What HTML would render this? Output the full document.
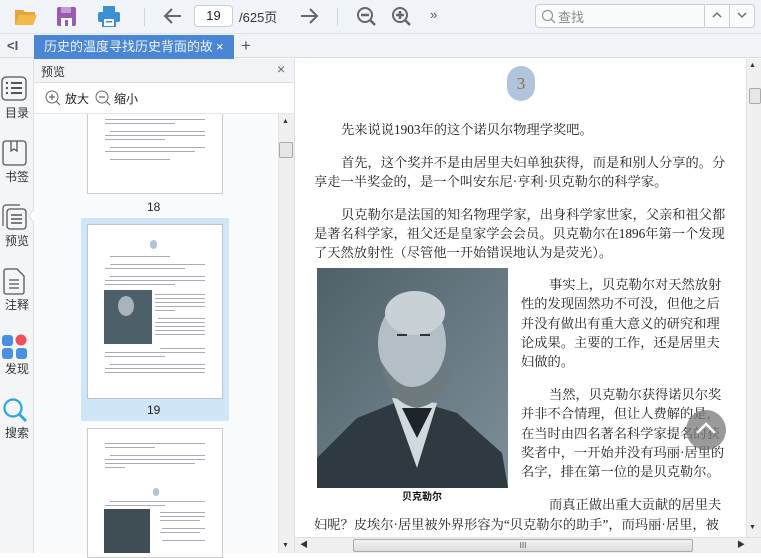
<!DOCTYPE html>
<html><head><meta charset="utf-8"><style>
*{margin:0;padding:0;box-sizing:border-box}
body{width:761px;height:553px;overflow:hidden;position:relative;font-family:"Liberation Sans","Noto Sans CJK SC",sans-serif;background:#fff}
.a{position:absolute}
.tb{left:0;top:0;width:761px;height:34px;background:#f0f4f8;border-bottom:1px solid #dde3ea}
.tabbar{left:0;top:34px;width:761px;height:24px;background:#f1f3f6;border-bottom:1px solid #d8dce2}
.side{left:0;top:58px;width:34px;height:495px;background:#f3f5f7;border-right:1px solid #dde1e6}
.lbl{font-size:12px;color:#333;width:34px;text-align:center;left:-3px}
.doc{font-family:"Liberation Serif","Noto Serif CJK SC",serif;font-size:13.25px;color:#222;white-space:nowrap;line-height:19px}
.bar{position:absolute;height:1.3px;background:#aab}
</style></head><body>
<div class="a tb"></div>
<svg class="a" style="left:14px;top:6px" width="24" height="20"><path d="M1 4h8l2 2h10v3H6L2 18H1z" fill="#e0a63a"/><path d="M5 9h18l-4 10H1z" fill="#f0b94a"/></svg>
<svg class="a" style="left:57px;top:7px" width="19" height="19"><rect x="0" y="0" width="19" height="19" rx="2" fill="#9b59b6"/><rect x="4" y="0" width="10" height="6" fill="#c39bd3"/><rect x="4" y="11" width="11" height="8" fill="#fff"/><rect x="8" y="13" width="3" height="6" fill="#9b59b6"/></svg>
<svg class="a" style="left:98px;top:6px" width="22" height="21"><rect x="5" y="0" width="12" height="6" fill="#3b8fd4"/><rect x="0" y="6" width="22" height="10" rx="2" fill="#3b8fd4"/><rect x="5" y="12" width="12" height="9" fill="#fff" stroke="#3b8fd4" stroke-width="2"/><rect x="8" y="15" width="6" height="1.5" fill="#3b8fd4"/></svg>
<div class="a" style="left:144px;top:8px;width:1px;height:18px;background:#cfd5dc"></div>
<svg class="a" style="left:163px;top:7px" width="20" height="18"><path d="M18 9H3M9 2L2 9l7 7" stroke="#666" stroke-width="2" fill="none"/></svg>
<div class="a" style="left:194px;top:5px;width:39px;height:22px;border:1px solid #c8ced6;border-radius:4px;background:#fff;font-size:13px;text-align:center;line-height:20px;color:#222">19</div>
<div class="a" style="left:239px;top:7px;font-size:13px;color:#333">/625页</div>
<svg class="a" style="left:299px;top:7px" width="20" height="18"><path d="M2 9h15M11 2l7 7-7 7" stroke="#666" stroke-width="2" fill="none"/></svg>
<div class="a" style="left:337px;top:8px;width:1px;height:18px;background:#cfd5dc"></div>
<svg class="a" style="left:356px;top:6px" width="22" height="22"><circle cx="9" cy="9" r="7" stroke="#666" stroke-width="2" fill="none"/><path d="M5 9h8M14 14l5 5" stroke="#666" stroke-width="2.5"/></svg>
<svg class="a" style="left:391px;top:6px" width="22" height="22"><circle cx="9" cy="9" r="7" stroke="#666" stroke-width="2" fill="none"/><path d="M5 9h8M9 5v8M14 14l5 5" stroke="#666" stroke-width="2.5"/></svg>
<div class="a" style="left:430px;top:7px;font-size:13px;color:#555">»</div>
<div class="a" style="left:535px;top:4px;width:220px;height:24px;border:1px solid #c8ced6;border-radius:4px;background:#fafbfc"></div>
<svg class="a" style="left:541px;top:9px" width="16" height="16"><circle cx="6.5" cy="6.5" r="5" stroke="#999" stroke-width="1.2" fill="none"/><path d="M10 10l4 4" stroke="#999" stroke-width="1.3"/></svg>
<div class="a" style="left:558px;top:7px;font-size:13px;color:#888">查找</div>
<div class="a" style="left:704px;top:5px;width:1px;height:22px;background:#c8ced6"></div>
<div class="a" style="left:729px;top:5px;width:1px;height:22px;background:#c8ced6"></div>
<svg class="a" style="left:711px;top:11px" width="12" height="8"><path d="M2 6l4-4 4 4" stroke="#666" stroke-width="1.3" fill="none"/></svg>
<svg class="a" style="left:736px;top:11px" width="12" height="8"><path d="M2 2l4 4 4-4" stroke="#666" stroke-width="1.3" fill="none"/></svg>
<div class="a tabbar"></div>
<div class="a" style="left:7px;top:38px;font-size:13px;color:#555;font-weight:bold">&lt;I</div>
<div class="a" style="left:34px;top:35px;width:200px;height:24px;background:#4a86d4"></div>
<div class="a" style="left:44px;top:35px;width:168px;height:24px;color:#eef4fc;font-size:13px;line-height:23px;white-space:nowrap;overflow:hidden">历史的温度寻找历史背面的故事</div>
<div class="a" style="left:216px;top:35px;width:14px;height:24px;color:#fff;font-size:13px;line-height:23px">×</div>
<div class="a" style="left:241px;top:36px;font-size:17px;color:#555">+</div>
<div class="a side"></div>
<svg class="a" style="left:1px;top:76px" width="26" height="26"><rect x="1" y="1" width="24" height="23" rx="4" stroke="#555" stroke-width="1.3" fill="none"/><path d="M5 7h2M10 7h11M5 12h2M10 12h11M5 17h2M10 17h11" stroke="#555" stroke-width="2"/></svg>
<div class="a lbl" style="top:104px;left:0">目录</div>
<svg class="a" style="left:2px;top:140px" width="25" height="26"><rect x="1" y="1" width="23" height="24" rx="3" stroke="#555" stroke-width="1.3" fill="none"/><path d="M9 1v10l3-2 3 2V1" stroke="#555" stroke-width="1.3" fill="none"/></svg>
<div class="a lbl" style="top:168px;left:0">书签</div>
<svg class="a" style="left:2px;top:204px" width="25" height="26"><path d="M1 22V4a3 3 0 0 1 3-3h14" stroke="#555" stroke-width="1.2" fill="none"/><rect x="5" y="5" width="19" height="20" rx="3" stroke="#555" stroke-width="1.3" fill="#f3f5f7"/><path d="M9 11h11M9 15h11M9 19h11" stroke="#555" stroke-width="1.5"/></svg>
<div class="a lbl" style="top:232px;left:0">预览</div>
<svg class="a" style="left:29px;top:208px" width="6" height="16"><path d="M6 0L0 8l6 8" fill="#fff" stroke="#dde1e6"/></svg>
<svg class="a" style="left:3px;top:268px" width="22" height="27"><path d="M1 3a2 2 0 0 1 2-2h11l7 7v16a2 2 0 0 1-2 2H3a2 2 0 0 1-2-2z" stroke="#555" stroke-width="1.3" fill="none"/><path d="M6 12h10M6 16h10M6 20h10" stroke="#555" stroke-width="1.3"/></svg>
<div class="a lbl" style="top:296px;left:0">注释</div>
<svg class="a" style="left:2px;top:333px" width="26" height="26"><rect x="0" y="2" width="11" height="11" rx="3" fill="#4a90e2"/><circle cx="19" cy="7" r="5.5" fill="#f0505a"/><rect x="0" y="15" width="11" height="11" rx="3" fill="#4a90e2"/><rect x="14" y="15" width="11" height="11" rx="3" fill="#4a90e2"/></svg>
<div class="a lbl" style="top:360px;left:0">发现</div>
<svg class="a" style="left:2px;top:397px" width="26" height="26"><circle cx="11" cy="11" r="8.5" stroke="#2aa6e0" stroke-width="2.2" fill="none"/><path d="M17 17l7 7" stroke="#2aa6e0" stroke-width="2.8"/></svg>
<div class="a lbl" style="top:424px;left:0">搜索</div>
<div class="a" style="left:34px;top:59px;width:260px;height:24px;background:#f1f3f6;border-bottom:1px solid #dde1e6"></div>
<div class="a" style="left:41px;top:63px;font-size:12px;color:#333">预览</div>
<div class="a" style="left:277px;top:61px;font-size:14px;color:#666">×</div>
<div class="a" style="left:34px;top:83px;width:260px;height:31px;background:#fff;border-bottom:1px solid #e3e6ea"></div>
<svg class="a" style="left:45px;top:90px" width="16" height="16"><circle cx="7" cy="7" r="6" stroke="#666" fill="none"/><path d="M4 7h6M7 4v6M11 11l4 4" stroke="#666" stroke-width="1.2"/></svg>
<div class="a" style="left:65px;top:90px;font-size:12px;color:#222">放大</div>
<svg class="a" style="left:95px;top:90px" width="16" height="16"><circle cx="7" cy="7" r="6" stroke="#666" fill="none"/><path d="M4 7h6M11 11l4 4" stroke="#666" stroke-width="1.2"/></svg>
<div class="a" style="left:114px;top:90px;font-size:12px;color:#222">缩小</div>
<div class="a" style="left:34px;top:114px;width:244px;height:439px;background:#fafbfc"></div>
<div class="a" style="left:278px;top:114px;width:16px;height:439px;background:#f0f0f0;border-left:1px solid #e4e4e4"></div>
<div class="a" style="left:279px;top:142px;width:14px;height:16px;background:#e6e6e6;border:1px solid #aaa;border-radius:2px"></div>
<div class="a" style="left:282px;top:118px;font-size:7px;color:#333">▲</div>
<div class="a" style="left:282px;top:542px;font-size:7px;color:#333">▼</div>
<div class="a" style="left:87px;top:114px;width:136px;height:80px;background:#fff;border:1px solid #ccc;border-top:none"></div>
<div class="bar" style="left:105px;top:119px;width:100px"></div><div class="bar" style="left:105px;top:123px;width:70px"></div>
<div class="bar" style="left:110px;top:131px;width:95px"></div><div class="bar" style="left:105px;top:135px;width:100px"></div><div class="bar" style="left:105px;top:139px;width:60px"></div>
<div class="bar" style="left:110px;top:147px;width:95px"></div><div class="bar" style="left:105px;top:151px;width:90px"></div>
<div class="bar" style="left:110px;top:159px;width:60px"></div>
<div class="a" style="left:147px;top:200px;font-size:12px;color:#222">18</div>
<div class="a" style="left:81px;top:218px;width:148px;height:203px;background:#cfe5f8"></div>
<div class="a" style="left:87px;top:224px;width:136px;height:175px;background:#fff;border:1px solid #b9c6d2"></div>
<div class="a" style="left:150px;top:240px;width:7px;height:9px;border-radius:4px;background:#b0c4dc"></div>
<div class="bar" style="left:110px;top:256px;width:60px"></div>
<div class="bar" style="left:110px;top:264px;width:95px"></div><div class="bar" style="left:105px;top:268px;width:80px"></div>
<div class="bar" style="left:110px;top:276px;width:95px"></div><div class="bar" style="left:105px;top:280px;width:100px"></div><div class="bar" style="left:105px;top:284px;width:70px"></div>
<div class="a" style="left:104px;top:290px;width:48px;height:54px;background:#4d5f68"></div>
<div class="a" style="left:118px;top:296px;width:16px;height:20px;border-radius:50%;background:#a8b4ba"></div>
<div class="bar" style="left:155px;top:294px;width:50px"></div><div class="bar" style="left:155px;top:298px;width:50px"></div><div class="bar" style="left:155px;top:302px;width:50px"></div><div class="bar" style="left:155px;top:306px;width:50px"></div><div class="bar" style="left:155px;top:310px;width:20px"></div>
<div class="bar" style="left:158px;top:318px;width:47px"></div><div class="bar" style="left:155px;top:322px;width:50px"></div><div class="bar" style="left:155px;top:326px;width:50px"></div><div class="bar" style="left:155px;top:330px;width:50px"></div><div class="bar" style="left:155px;top:334px;width:50px"></div>
<div class="bar" style="left:160px;top:348px;width:45px"></div><div class="bar" style="left:105px;top:352px;width:100px"></div><div class="bar" style="left:105px;top:356px;width:60px"></div>
<div class="bar" style="left:110px;top:364px;width:95px"></div><div class="bar" style="left:105px;top:368px;width:100px"></div><div class="bar" style="left:105px;top:372px;width:100px"></div>
<div class="a" style="left:147px;top:403px;font-size:12px;color:#222">19</div>
<div class="a" style="left:87px;top:428px;width:136px;height:130px;background:#fff;border:1px solid #ccc"></div>
<div class="bar" style="left:105px;top:443px;width:100px"></div><div class="bar" style="left:105px;top:447px;width:50px"></div>
<div class="bar" style="left:110px;top:455px;width:95px"></div><div class="bar" style="left:105px;top:459px;width:100px"></div><div class="bar" style="left:105px;top:463px;width:90px"></div><div class="bar" style="left:105px;top:467px;width:20px"></div>
<div class="a" style="left:153px;top:488px;width:6px;height:8px;border-radius:3px;background:#b0c4dc"></div>
<div class="bar" style="left:110px;top:501px;width:95px"></div><div class="bar" style="left:105px;top:505px;width:60px"></div>
<div class="a" style="left:104px;top:509px;width:46px;height:44px;background:#3f4d55"></div>
<div class="bar" style="left:160px;top:512px;width:45px"></div><div class="bar" style="left:160px;top:516px;width:45px"></div><div class="bar" style="left:160px;top:520px;width:40px"></div><div class="bar" style="left:162px;top:528px;width:43px"></div><div class="bar" style="left:160px;top:532px;width:40px"></div><div class="bar" style="left:162px;top:540px;width:43px"></div>
<div class="a" style="left:294px;top:59px;width:1px;height:494px;background:#dde1e6"></div>
<div class="a" style="left:295px;top:59px;width:451px;height:478px;background:#fff"></div>
<div class="a" style="left:507px;top:66px;width:28px;height:35px;border-radius:14px;background:#b0c4dc;font-family:'Liberation Serif',serif;font-size:17px;color:#8a7240;text-align:center;line-height:35px">3</div>
<div class="a doc" style="left:341px;top:120px">先来说说1903年的这个诺贝尔物理学奖吧。</div>
<div class="a doc" style="left:341px;top:153px">首先，这个奖并不是由居里夫妇单独获得，而是和别人分享的。分</div>
<div class="a doc" style="left:314px;top:172px">享走一半奖金的，是一个叫安东尼·亨利·贝克勒尔的科学家。</div>
<div class="a doc" style="left:341px;top:205px">贝克勒尔是法国的知名物理学家，出身科学家世家，父亲和祖父都</div>
<div class="a doc" style="left:314px;top:224px">是著名科学家，祖父还是皇家学会会员。贝克勒尔在1896年第一个发现</div>
<div class="a doc" style="left:314px;top:243px">了天然放射性（尽管他一开始错误地认为是荧光）。</div>
<svg class="a" style="left:317px;top:268px" width="191" height="220"><defs><linearGradient id="g" x1="0" y1="0" x2="1" y2="1"><stop offset="0" stop-color="#4f6068"/><stop offset="1" stop-color="#7d909a"/></linearGradient></defs><rect width="191" height="220" fill="url(#g)"/><path d="M0 220V190l40-40 50-20 50 15 45 40 6 35z" fill="#2e3a40"/><path d="M75 130l25 70 20-65z" fill="#d0dade"/><path d="M85 140l15 30 15-30z" fill="#1c2428"/><ellipse cx="95" cy="75" rx="34" ry="44" fill="#b3bfc4"/><ellipse cx="98" cy="45" rx="30" ry="22" fill="#c8d2d6"/><path d="M65 95q30 50 70 0q-5 40-35 45q-30-5-35-45z" fill="#6f7a7e"/><path d="M80 67h10M103 67h10" stroke="#333" stroke-width="2"/></svg>
<div class="a" style="left:402px;top:488px;font-size:10px;font-weight:bold;color:#111">贝克勒尔</div>
<div class="a doc" style="left:549px;top:275px">事实上，贝克勒尔对天然放射</div>
<div class="a doc" style="left:521px;top:294px">性的发现固然功不可没，但他之后</div>
<div class="a doc" style="left:521px;top:314px">并没有做出有重大意义的研究和理</div>
<div class="a doc" style="left:521px;top:333px">论成果。主要的工作，还是居里夫</div>
<div class="a doc" style="left:521px;top:352px">妇做的。</div>
<div class="a doc" style="left:549px;top:385px">当然，贝克勒尔获得诺贝尔奖</div>
<div class="a doc" style="left:521px;top:404px">并非不合情理，但让人费解的是，</div>
<div class="a doc" style="left:521px;top:424px">在当时由四名著名科学家提名的获</div>
<div class="a doc" style="left:521px;top:443px">奖者中，一开始并没有玛丽·居里的</div>
<div class="a doc" style="left:521px;top:462px">名字，排在第一位的是贝克勒尔。</div>
<div class="a doc" style="left:549px;top:495px">而真正做出重大贡献的居里夫</div>
<div class="a doc" style="left:314px;top:515px">妇呢？皮埃尔·居里被外界形容为“贝克勒尔的助手”，而玛丽·居里，被</div>
<div class="a" style="left:686px;top:410px;width:40px;height:40px;border-radius:50%;background:rgba(120,120,120,.75)"></div>
<svg class="a" style="left:694px;top:420px" width="24" height="16"><path d="M3 13l9-9 9 9" stroke="#fff" stroke-width="2.5" fill="none"/></svg>
<div class="a" style="left:746px;top:59px;width:15px;height:478px;background:#f0f0f0;border-left:1px solid #e0e0e0"></div>
<div class="a" style="left:749px;top:62px;font-size:7px;color:#333">▲</div>
<div class="a" style="left:749px;top:88px;width:12px;height:16px;background:#e6e6e6;border:1px solid #aaa;border-radius:2px"></div>
<div class="a" style="left:749px;top:524px;font-size:7px;color:#333">▼</div>
<div class="a" style="left:295px;top:537px;width:466px;height:16px;background:#f0f0f0;border-top:1px solid #e0e0e0"></div>
<div class="a" style="left:300px;top:539px;font-size:8px;color:#333">◀</div>
<div class="a" style="left:353px;top:539px;width:340px;height:13px;background:linear-gradient(#f2f2f2,#dcdcdc);border:1px solid #aaa;border-radius:2px;font-size:8px;text-align:center;line-height:11px;color:#555">III</div>
<div class="a" style="left:737px;top:539px;font-size:8px;color:#333">▶</div>
</body></html>
